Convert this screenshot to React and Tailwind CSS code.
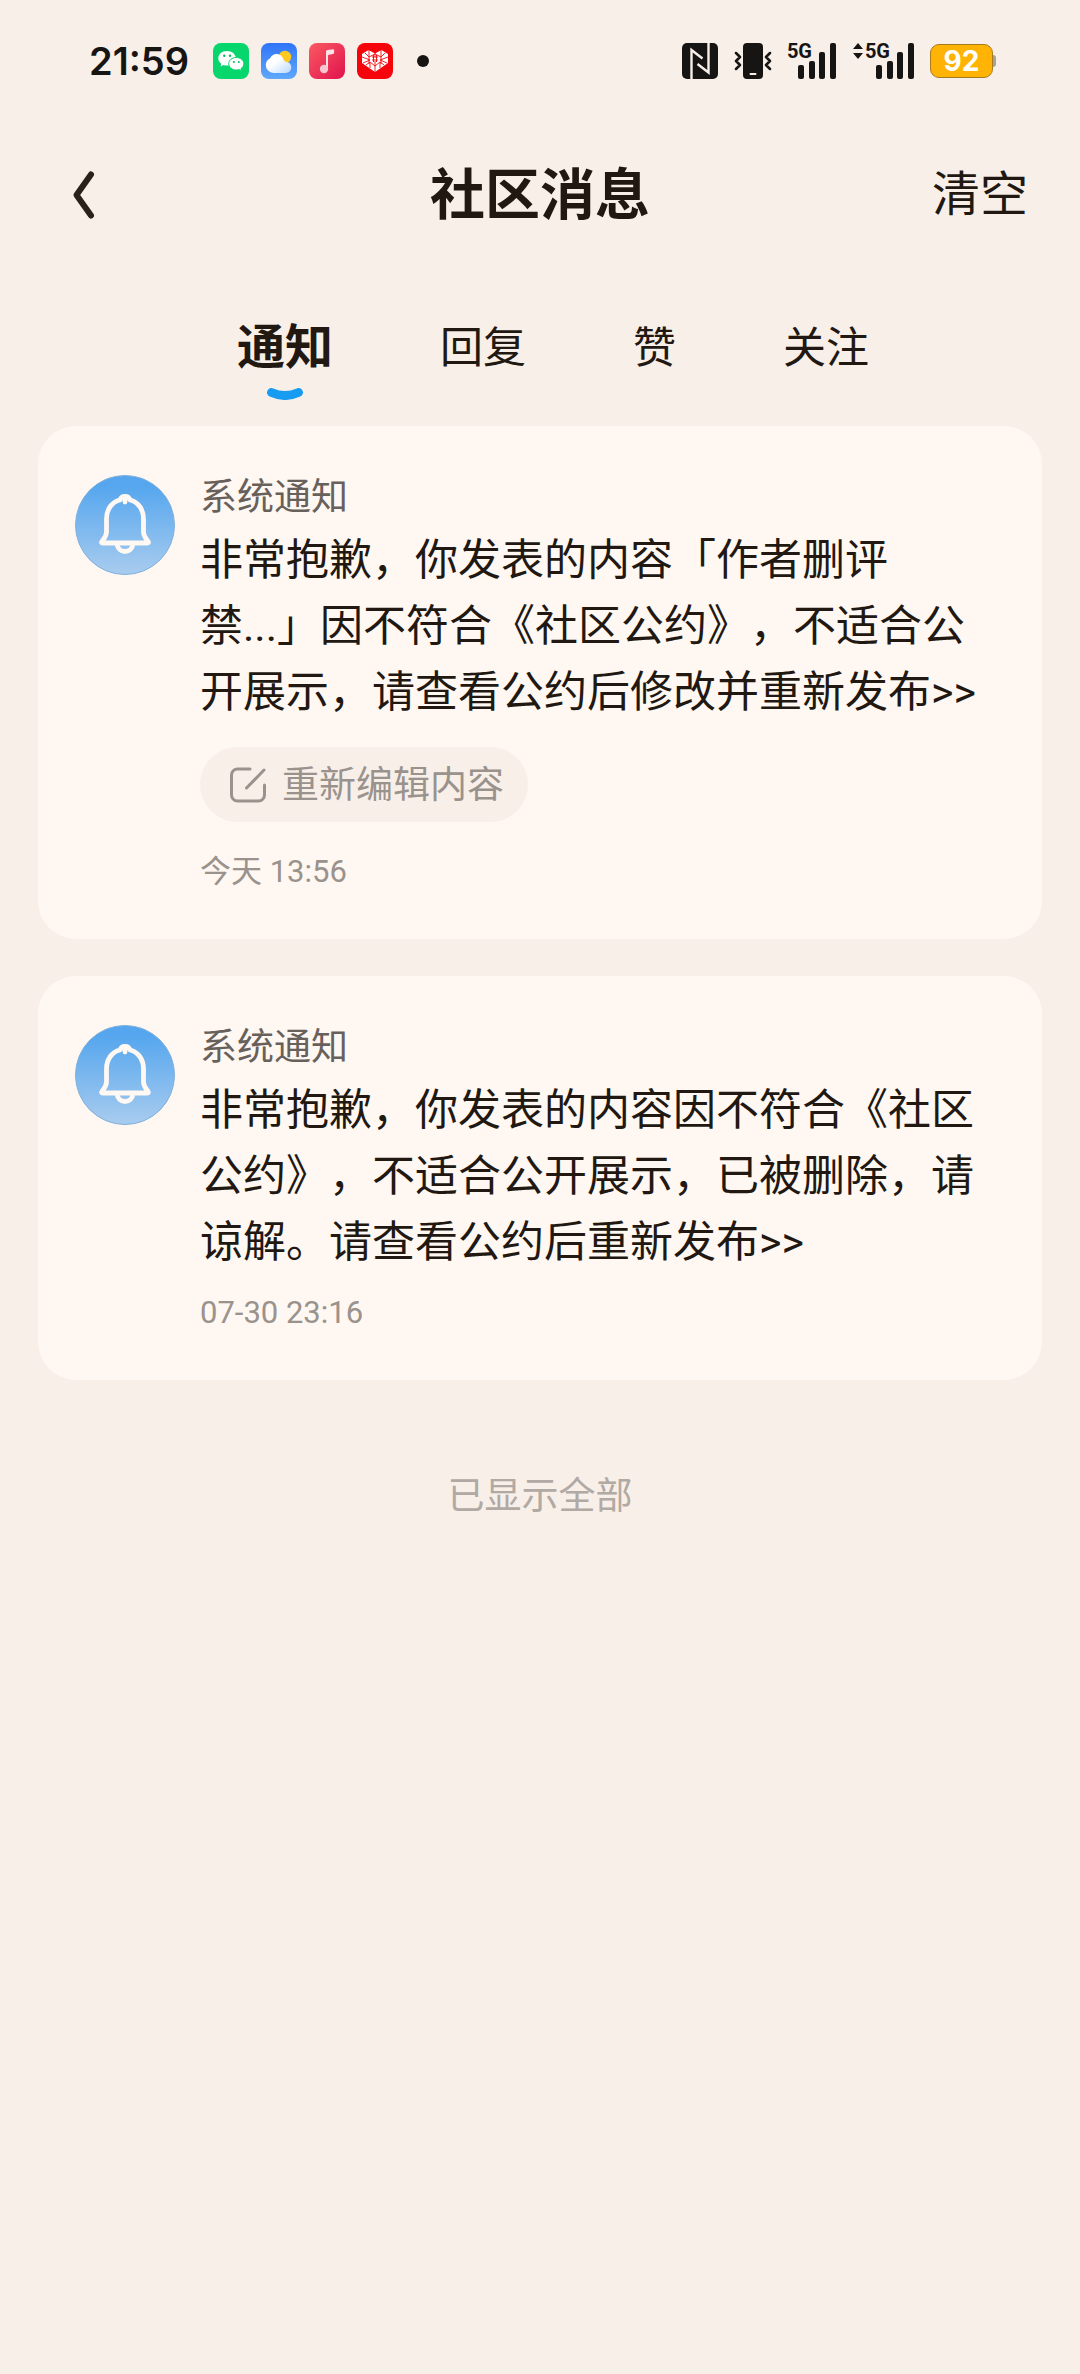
import React, { useState } from 'react';

const tabs = ['通知', '回复', '赞', '关注'];

const notices = [
  {
    id: 1,
    title: '系统通知',
    text: '非常抱歉，你发表的内容「作者删评禁...」因不符合《社区公约》，不适合公开展示，请查看公约后修改并重新发布>>',
    time: '今天 13:56',
    editable: true,
  },
  {
    id: 2,
    title: '系统通知',
    text: '非常抱歉，你发表的内容因不符合《社区公约》，不适合公开展示，已被删除，请谅解。请查看公约后重新发布>>',
    time: '07-30 23:16',
    editable: false,
  },
];

const WechatIcon = () => (
  <svg className="w-9 h-9" viewBox="0 0 36 36">
    <rect width="36" height="36" rx="8" fill="#06d66b" />
    <path d="M14 8c-5 0-8.700 3.200-8.700 7.300 0 2.300 1.200 4.200 3 5.500l-.8 2.700 3-1.500c1.100.4 2.300.6 3.500.6 5 0 8.800-3.200 8.800-7.300S19 8 14 8z" fill="#fff" />
    <path d="M23.300 14.500c-4.300 0-7.600 2.700-7.600 6.200s3.300 6.300 7.600 6.300c1 0 1.900-.2 2.700-.4l2.600 1.500-.7-2.500c1.800-1.200 2.900-2.900 2.900-4.900 0-3.500-3.300-6.200-7.500-6.200z" fill="#fff" stroke="#06d66b" />
    <circle cx="11.300" cy="12.800" r="1.200" fill="#06b85c" />
    <circle cx="17" cy="12.800" r="1.200" fill="#06b85c" />
    <circle cx="20.800" cy="19" r="1" fill="#06b85c" />
    <circle cx="25.800" cy="19" r="1" fill="#06b85c" />
  </svg>
);

const WeatherIcon = () => (
  <svg className="w-9 h-9" viewBox="0 0 36 36">
    <defs>
      <linearGradient id="sky" x1="0" y1="0" x2="0" y2="1">
        <stop offset="0" stopColor="#2f74f8" />
        <stop offset="1" stopColor="#5fa8fb" />
      </linearGradient>
      <linearGradient id="cloud" x1="0" y1="0" x2="1" y2="1">
        <stop offset="0.400" stopColor="#fff" />
        <stop offset="1" stopColor="#b9d8fb" />
      </linearGradient>
    </defs>
    <rect width="36" height="36" rx="8" fill="url(#sky)" />
    <circle cx="24" cy="14" r="6.200" fill="#ffc91f" />
    <path d="M12.500 30a7.800 7.800 0 0 1-7.700-8c0-3 1.700-5.500 4.200-6.600C10.300 12.800 12.800 11 15.500 11c3.300 0 5.900 2.200 6.800 5.200 1 1.800 2.500 3 4.500 3.100 2.200.8 3.500 2.800 3.500 5 0 3.200-2.500 5.700-5.600 5.700z" fill="url(#cloud)" />
  </svg>
);

const MusicIcon = () => (
  <svg className="w-9 h-9" viewBox="0 0 36 36">
    <defs>
      <linearGradient id="music" x1="0" y1="0" x2="1" y2="1">
        <stop offset="0" stopColor="#fb5a62" />
        <stop offset="1" stopColor="#e0124e" />
      </linearGradient>
    </defs>
    <rect width="36" height="36" rx="8" fill="url(#music)" />
    <path d="M17 8.800c0-1 .6-1.600 1.600-1.700l5.600-.8c.6 0 .9.300.9.800v2.700c0 .6-.4 1-1 1.100l-4.300.9c-.5.100-.8.400-.8.900v13.300h-2z" fill="#fde3e6" />
    <circle cx="15" cy="26" r="4.200" fill="#fbc5cf" />
  </svg>
);

const HeartIcon = () => (
  <svg className="w-9 h-9" viewBox="0 0 36 36">
    <rect width="36" height="36" rx="8" fill="#f5040c" />
    <path d="M11.500 7 18 10.500 24.500 7 31 11v9L18 29 5 20v-9z" fill="#fff" />
    <g fill="none" stroke="#f5040c" strokeWidth="0.900">
      <path d="M12 7v14M24 7v14M18 10v4M18 18v11M5 14l8 3-7 3M31 14l-8 3 7 3M8 10l4 4 6-3 6 3 4-4M9 22l4-3 5 4 5-4 4 3M13 25v-5M23 25v-5" />
      <path d="M15 14h6M15 17h6M16.500 12v7M19.500 12v7" />
    </g>
  </svg>
);

const NfcIcon = () => (
  <svg className="w-9 h-9" viewBox="0 0 36 36">
    <rect width="36" height="36" rx="5" fill="#171514" />
    <path d="M9.500 36V7l11 8.500M26.500 0v29.500L15.500 21" fill="none" stroke="#f8efe9" strokeWidth="2.400" />
  </svg>
);

const VibrateIcon = () => (
  <svg className="w-[38px] h-9" viewBox="0 0 38 36">
    <rect x="9" width="20" height="36" rx="4" fill="#171514" />
    <path d="M16.500 31h5" stroke="#f8efe9" strokeWidth="2" strokeLinecap="round" />
    <path d="M2 10l4 4-4 4 4 4-4 4M36 10l-4 4 4 4-4 4 4 4" fill="none" stroke="#171514" strokeWidth="2.500" strokeLinecap="round" strokeLinejoin="round" />
  </svg>
);

const Signal = ({ arrows }) => (
  <div className="relative flex items-end justify-end h-9">
    <span className="absolute right-6 -top-1 flex items-center gap-0.5 font-['Roboto',sans-serif] font-bold text-xl leading-6 text-[#171514]">
      {arrows && (
        <svg className="w-2.5 h-4" viewBox="0 0 10 16" fill="#171514">
          <path d="M5 0l5 6H0zM5 16l5-6H0z" />
        </svg>
      )}
      5G
    </span>
    <svg className={arrows ? 'w-[62px] h-9' : 'w-12 h-9'} viewBox={arrows ? '-24 0 62 36' : '-10 0 48 36'} fill="#171514">
      <rect x="0" y="22" width="6" height="14" rx="2" />
      <rect x="11" y="18" width="6" height="18" rx="2" />
      <rect x="21" y="9" width="6" height="27" rx="2" />
      <rect x="32" y="0" width="6" height="36" rx="2" />
    </svg>
  </div>
);

const StatusBar = () => (
  <div className="flex items-center justify-between h-[122px] pl-[89px] pr-[84px] font-['Inter',sans-serif]">
    <div className="flex items-center gap-3">
      <span className="w-28 text-[38px] leading-[48px] font-semibold text-[#171514]">21:59</span>
      <WechatIcon />
      <WeatherIcon />
      <MusicIcon />
      <HeartIcon />
      <span className="w-3 h-3 ml-3 rounded-full bg-[#171514]" />
    </div>
    <div className="flex items-center gap-4">
      <NfcIcon />
      <VibrateIcon />
      <Signal />
      <Signal arrows />
      <div className="flex items-center">
        <span className="flex items-center justify-center w-[63px] h-[34px] rounded-[9px] border border-[#a87c1c] bg-[#ffb305] text-[28px] leading-8 font-bold text-white">
          92
        </span>
        <span className="w-[3px] h-3 rounded-r bg-[#a7a19c]" />
      </div>
    </div>
  </div>
);

const BellAvatar = () => (
  <svg className="w-[100px] h-[100px] shrink-0" viewBox="0 0 100 100">
    <defs>
      <linearGradient id="bell" x1="0" y1="0" x2="0" y2="1">
        <stop offset="0.100" stopColor="#55a6ee" />
        <stop offset="1" stopColor="#a9ccef" />
      </linearGradient>
    </defs>
    <circle cx="50" cy="50" r="49.500" fill="url(#bell)" stroke="#7fb0dc" />
    <g fill="none" stroke="#fff8f3" strokeWidth="4.800" strokeLinecap="round" strokeLinejoin="round">
      <path d="M31.500 57V44c0-10 5.500-17 13.500-19 1-3 3-3.500 5-3.500s4 .5 5 3.500c8 2 13.500 9 13.500 19v13c0 4 2 6 4.500 9.500.8 1 .5 1.500-.7 1.500H27.700c-1.200 0-1.500-.5-.7-1.500 2.500-3.500 4.500-5.500 4.500-9.500z" />
      <path d="M42 69c.5 4.500 4 7.500 8 7.500s7.500-3 8-7.500M50 24v3" />
    </g>
  </svg>
);

const EditIcon = () => (
  <svg className="w-9 h-9" viewBox="0 0 36 36" fill="none" stroke="#9a928c" strokeWidth="3" strokeLinecap="round">
    <path d="M20 2H7.500A6 6 0 0 0 1.500 8v20a6 6 0 0 0 6 6h21a6 6 0 0 0 6-6V18M34 3L16.500 21" />
  </svg>
);

const NoticeCard = ({ notice }) => (
  <article className="flex items-start gap-[25px] px-[37px] pt-[49px] pb-[47px] rounded-[38px] bg-[#fff7f1]">
    <BellAvatar />
    <div className="flex flex-col items-start flex-1 min-w-0">
      <h2 className="text-[37px] leading-[46px] text-[#67605b]">{notice.title}</h2>
      <p className="mt-1.5 text-[43px] leading-[66px] text-[#211812]">{notice.text}</p>
      {notice.editable && (
        <button className="flex items-center gap-4 h-[75px] mt-[22px] mb-3 pl-[30px] pr-6 rounded-full bg-[#f8efe9] text-[37px] leading-[42px] text-[#9a928c]">
          <EditIcon />
          <span className="pt-0.5">重新编辑内容</span>
        </button>
      )}
      <time className="mt-[18px] text-[31px] leading-10 text-[#9a928c]">{notice.time}</time>
    </div>
  </article>
);

const App = () => {
  const [activeTab, setActiveTab] = useState('通知');

  return (
    <div className="min-h-screen bg-[#f8efe9] text-[#211812] font-['Roboto','Noto_Sans_CJK_SC',sans-serif] [text-spacing-trim:space-all]" lang="zh-CN">
      <StatusBar />

      {/* Header */}
      <header className="grid grid-cols-3 items-center h-[146px] px-[52px]">
        <button aria-label="返回" className="justify-self-start ml-[18px]">
          <svg className="w-7 h-[52px]" viewBox="0 0 28 52" fill="none" stroke="#2b211b" strokeWidth="6" strokeLinecap="round" strokeLinejoin="round">
            <path d="M21 5.500L6.500 26 21 46.500" />
          </svg>
        </button>
        <h1 className="justify-self-center text-[55px] leading-[64px] font-bold whitespace-nowrap">社区消息</h1>
        <button className="justify-self-end text-5xl leading-[64px]">清空</button>
      </header>

      {/* Tabs */}
      <nav className="flex justify-center gap-[107px] h-[158px] pt-12 pl-[26px]">
        {tabs.map((tab) => (
          <button
            key={tab}
            onClick={() => setActiveTab(tab)}
            className={`flex flex-col items-center h-[88px] ${activeTab === tab ? 'text-5xl font-bold' : 'text-[43px]'}`}
          >
            <span className="leading-[64px]">{tab}</span>
            {activeTab === tab && (
              <svg className="w-9 h-3 mt-2" viewBox="0 0 36 12" fill="none" stroke="#189cf2" strokeWidth="9" strokeLinecap="round">
                <path d="M4.500 4.500Q18 10.500 31.500 4.500" />
              </svg>
            )}
          </button>
        ))}
      </nav>

      {/* Notices */}
      <main className="flex flex-col gap-[37px] px-[38px]">
        {notices.map((notice) => (
          <NoticeCard key={notice.id} notice={notice} />
        ))}
      </main>

      <p className="pt-24 text-center text-[37px] leading-[42px] text-[#b1a9a3]">已显示全部</p>
    </div>
  );
};

export default App;
